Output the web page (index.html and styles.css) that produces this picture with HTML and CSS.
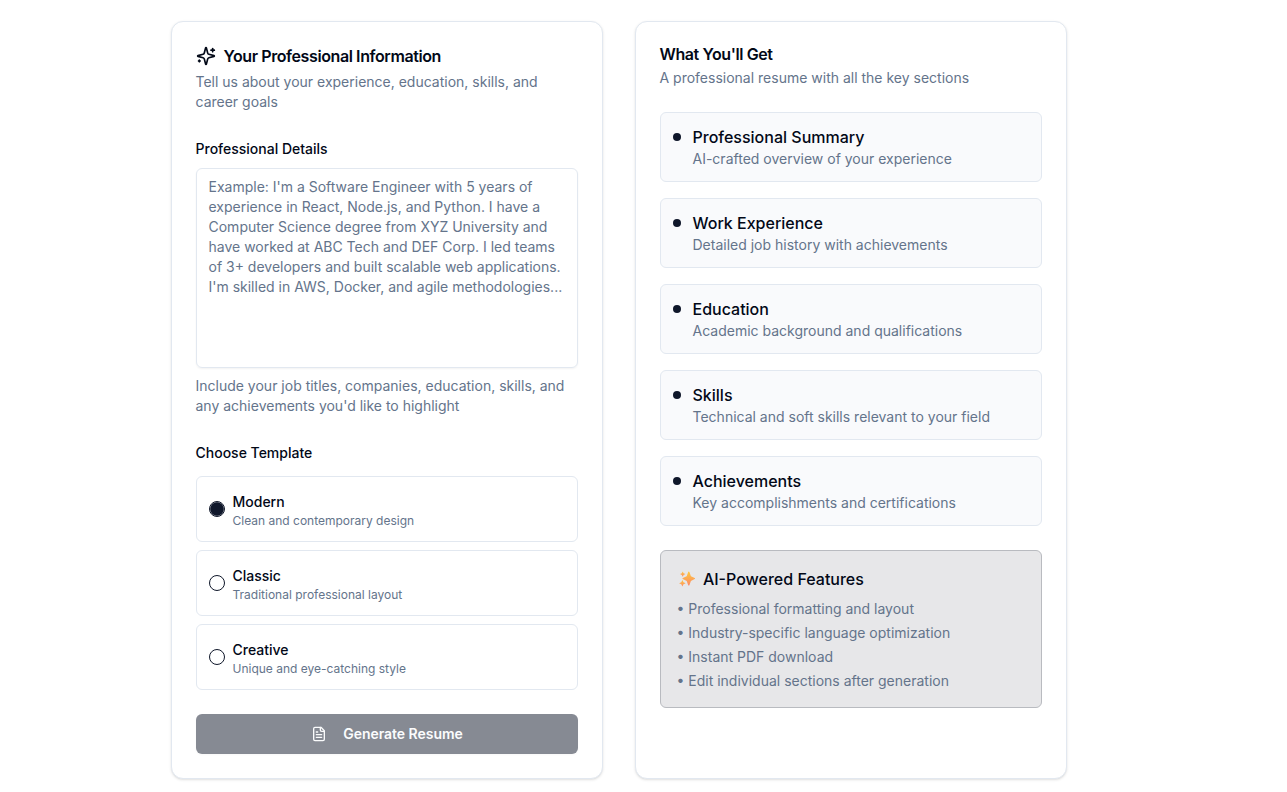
FILE: index.html
```html
<!DOCTYPE html>
<html lang="en">
<head>
<meta charset="utf-8">
<title>Resume Generator</title>
<link rel="stylesheet" href="styles.css">
</head>
<body>
<main class="layout">
  <section class="card">
    <header class="card-header">
      <h2 class="card-title with-icon">
        <svg class="icon-lg" viewBox="0 0 24 24"><path d="M9.937 15.5A2 2 0 0 0 8.5 14.063l-6.135-1.582a.5.5 0 0 1 0-.962L8.5 9.936A2 2 0 0 0 9.937 8.5l1.582-6.135a.5.5 0 0 1 .963 0L14.063 8.5A2 2 0 0 0 15.5 9.937l6.135 1.581a.5.5 0 0 1 0 .964L15.5 14.063a2 2 0 0 0-1.437 1.437l-1.582 6.135a.5.5 0 0 1-.963 0z"/><path d="M20 3v4"/><path d="M22 5h-4"/><path d="M4 17v2"/><path d="M5 18H3"/></svg>
        Your Professional Information
      </h2>
      <p class="muted">Tell us about your experience, education, skills, and career goals</p>
    </header>
    <form class="form">
      <div class="field">
        <div class="label-row"><label class="label" for="details">Professional Details</label></div>
        <textarea id="details" class="textarea" placeholder="Example: I'm a Software Engineer with 5 years of experience in React, Node.js, and Python. I have a Computer Science degree from XYZ University and have worked at ABC Tech and DEF Corp. I led teams of 3+ developers and built scalable web applications. I'm skilled in AWS, Docker, and agile methodologies..."></textarea>
        <p class="muted">Include your job titles, companies, education, skills, and any achievements you'd like to highlight</p>
      </div>
      <div class="templates">
        <div class="label-row"><span class="label">Choose Template</span></div>
        <div class="options">
          <label class="option"><span class="radio checked"></span><span><span class="option-name"><span class="label">Modern</span></span><span class="option-note">Clean and contemporary design</span></span></label>
          <label class="option"><span class="radio"></span><span><span class="option-name"><span class="label">Classic</span></span><span class="option-note">Traditional professional layout</span></span></label>
          <label class="option"><span class="radio"></span><span><span class="option-name"><span class="label">Creative</span></span><span class="option-note">Unique and eye-catching style</span></span></label>
        </div>
      </div>
      <button type="button" class="generate">
        <svg class="icon-sm" viewBox="0 0 24 24"><path d="M15 2H6a2 2 0 0 0-2 2v16a2 2 0 0 0 2 2h12a2 2 0 0 0 2-2V7Z"/><path d="M14 2v4a2 2 0 0 0 2 2h4"/><path d="M10 9H8"/><path d="M16 13H8"/><path d="M16 17H8"/></svg>
        Generate Resume
      </button>
    </form>
  </section>

  <section class="card">
    <header class="card-header">
      <h2 class="card-title">What You'll Get</h2>
      <p class="muted">A professional resume with all the key sections</p>
    </header>
    <div class="sections">
      <div class="item"><span class="dot"></span><div><h4 class="item-title">Professional Summary</h4><p class="muted">AI-crafted overview of your experience</p></div></div>
      <div class="item"><span class="dot"></span><div><h4 class="item-title">Work Experience</h4><p class="muted">Detailed job history with achievements</p></div></div>
      <div class="item"><span class="dot"></span><div><h4 class="item-title">Education</h4><p class="muted">Academic background and qualifications</p></div></div>
      <div class="item"><span class="dot"></span><div><h4 class="item-title">Skills</h4><p class="muted">Technical and soft skills relevant to your field</p></div></div>
      <div class="item"><span class="dot"></span><div><h4 class="item-title">Achievements</h4><p class="muted">Key accomplishments and certifications</p></div></div>
    </div>
    <div class="features">
      <h4 class="item-title features-title">
        <svg class="sparkles" viewBox="0 0 16 16">
          <defs><linearGradient id="spark" x1="0" y1="0" x2="0" y2="1"><stop offset="0" stop-color="#ffc83d"/><stop offset="1" stop-color="#fc8a68"/></linearGradient></defs>
          <g fill="url(#spark)"><path d="M9.200.9Q9.800.2 10.400.9L11.900 5.200 15.700 6.900Q16.400 7.500 15.700 8.100L11.900 9.900 10.400 14.200Q9.800 14.900 9.200 14.200L7.700 9.900 3.800 8.100Q3.100 7.500 3.800 6.900L7.700 5.200Z"/><path d="M3.700.5 4.600 2.200 6.400 3 4.600 3.900 3.700 5.700 2.800 3.900 1 3 2.800 2.200Z"/><path d="M3.400 9 4.500 11.200 6.700 12.200 4.500 13.300 3.400 15.500 2.300 13.300.1 12.200 2.300 11.200Z"/></g>
        </svg>
        AI-Powered Features
      </h4>
      <ul class="feature-list">
        <li>• Professional formatting and layout</li>
        <li>• Industry-specific language optimization</li>
        <li>• Instant PDF download</li>
        <li>• Edit individual sections after generation</li>
      </ul>
    </div>
  </section>
</main>
</body>
</html>
```
FILE: styles.css
```css
*, *::before, *::after { box-sizing: border-box; margin: 0; padding: 0; }
body {
  background: #fff;
  color: #020817;
  font: 400 16px/24px Inter, "Liberation Sans", sans-serif;
  overflow: hidden;
}
.layout {
  display: grid;
  grid-template-columns: 432px 432px;
  gap: 32px;
  padding: 21px 0 13px 170.5px;
}
.card {
  padding: 24px;
  border: 1px solid #e2e8f0;
  border-radius: 12px;
  background: #fff;
  box-shadow: 0 1px 3px rgb(0 0 0 / .1), 0 1px 2px -1px rgb(0 0 0 / .1);
}
.card-header { display: flex; flex-direction: column; gap: 6px; margin-bottom: 24px; }
.card-title { font-size: 16px; font-weight: 600; line-height: 1; letter-spacing: -0.4px; }
.with-icon { display: flex; align-items: center; gap: 8px; }
svg { fill: none; stroke: currentColor; stroke-width: 2; stroke-linecap: round; stroke-linejoin: round; flex: none; }
.icon-lg { width: 20px; height: 20px; }
.icon-sm { width: 16px; height: 16px; margin-right: 8px; }
.muted { color: #64748b; font-size: 14px; line-height: 20px; }
.form { display: flex; flex-direction: column; gap: 24px; }
.field { display: flex; flex-direction: column; gap: 8px; }
.label-row { height: 24px; }
.label { font-size: 14px; font-weight: 500; line-height: 14px; }
.textarea {
  display: block;
  width: 100%;
  height: 200px;
  padding: 8px 12px;
  border: 1px solid #e2e8f0;
  border-radius: 6px;
  background: transparent;
  box-shadow: 0 1px 2px rgb(0 0 0 / .05);
  font: 400 14px/20px Inter, "Liberation Sans", sans-serif;
  resize: none;
}
.textarea::placeholder { color: #64748b; opacity: 1; }
.templates { display: flex; flex-direction: column; gap: 12px; }
.options { display: flex; flex-direction: column; gap: 8px; }
.option { display: flex; align-items: center; gap: 8px; padding: 12px; border: 1px solid #e2e8f0; border-radius: 6px; }
.option-name { display: block; height: 24px; }
.option-note { display: block; color: #64748b; font-size: 12px; line-height: 16px; }
.radio { width: 16px; height: 16px; border: 1px solid #0f172a; border-radius: 50%; flex: none; }
.checked { background: radial-gradient(circle, #0f172a 6.3px, #a5a8b0 6.9px); }
.generate {
  display: flex;
  align-items: center;
  justify-content: center;
  gap: 8px;
  height: 40px;
  padding-left: 1px;
  border: 0;
  border-radius: 6px;
  background: #0f172a;
  color: #f8fafc;
  opacity: .5;
  box-shadow: 0 1px 2px rgb(0 0 0 / .05);
  font: 600 14px/20px Inter, "Liberation Sans", sans-serif;
  letter-spacing: -0.04px;
}
.sections { display: flex; flex-direction: column; gap: 16px; }
.item { display: flex; gap: 12px; padding: 12px; border: 1px solid #e2e8f0; border-radius: 6px; background: #f9fafc; }
.dot { width: 8px; height: 8px; margin-top: 8px; border-radius: 50%; background: #0f172a; flex: none; }
.item-title { font-size: 16px; font-weight: 500; line-height: 24px; }
.features { margin-top: 24px; padding: 16px; border: 1px solid #b9bbc0; border-radius: 6px; background: #e7e7e9; }
.features-title { display: flex; align-items: center; gap: 8px; margin-bottom: 8px; padding-left: 2.4px; }
.sparkles { width: 16px; height: 16px; stroke: none; }
.feature-list { display: flex; flex-direction: column; gap: 4px; list-style: none; color: #64748b; font-size: 14px; line-height: 20px; }
```
